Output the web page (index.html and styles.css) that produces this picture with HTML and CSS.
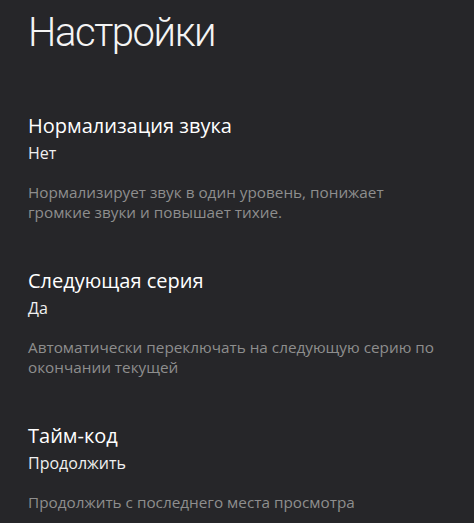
FILE: index.html
```html
<!DOCTYPE html>
<html lang="ru">
<head>
<meta charset="utf-8">
<title>Настройки</title>
<link rel="stylesheet" href="styles.css">
</head>
<body>
<main class="page">
  <h1 class="title">Настройки</h1>
  <section class="setting">
    <h2 class="setting-name">Нормализация звука</h2>
    <div class="setting-value">Нет</div>
    <p class="setting-desc">Нормализирует звук в один уровень, понижает громкие звуки и повышает тихие.</p>
  </section>
  <section class="setting">
    <h2 class="setting-name">Следующая серия</h2>
    <div class="setting-value">Да</div>
    <p class="setting-desc">Автоматически переключать на следующую серию по окончании текущей</p>
  </section>
  <section class="setting">
    <h2 class="setting-name">Тайм-код</h2>
    <div class="setting-value">Продолжить</div>
    <p class="setting-desc">Продолжить с последнего места просмотра</p>
  </section>
</main>
</body>
</html>
```

FILE: styles.css
```css
html, body {
  margin: 0;
  padding: 0;
  background: #262629;
}
body {
  font-family: "Open Sans", "Noto Sans", sans-serif;
  color: #ffffff;
}
.page {
  padding: 8px 0 0 28px;
}
.title {
  margin: 0 0 56px 0;
  font-family: "Roboto", "Open Sans", sans-serif;
  font-size: 40px;
  line-height: 50px;
  font-weight: 300;
  letter-spacing: -1.4px;
  color: #f4f4f4;
}
.setting + .setting {
  margin-top: 47px;
}
.setting-name {
  margin: 0;
  font-size: 20px;
  line-height: 24px;
  font-weight: 400;
  color: #ffffff;
}
.setting-value {
  margin-top: 4px;
  font-size: 16px;
  line-height: 22px;
  color: #f0f0f0;
}
.setting-desc {
  margin: 18px 0 0 0;
  max-width: 416px;
  font-size: 15.3px;
  line-height: 20px;
  color: #8e8e8e;
}
```
